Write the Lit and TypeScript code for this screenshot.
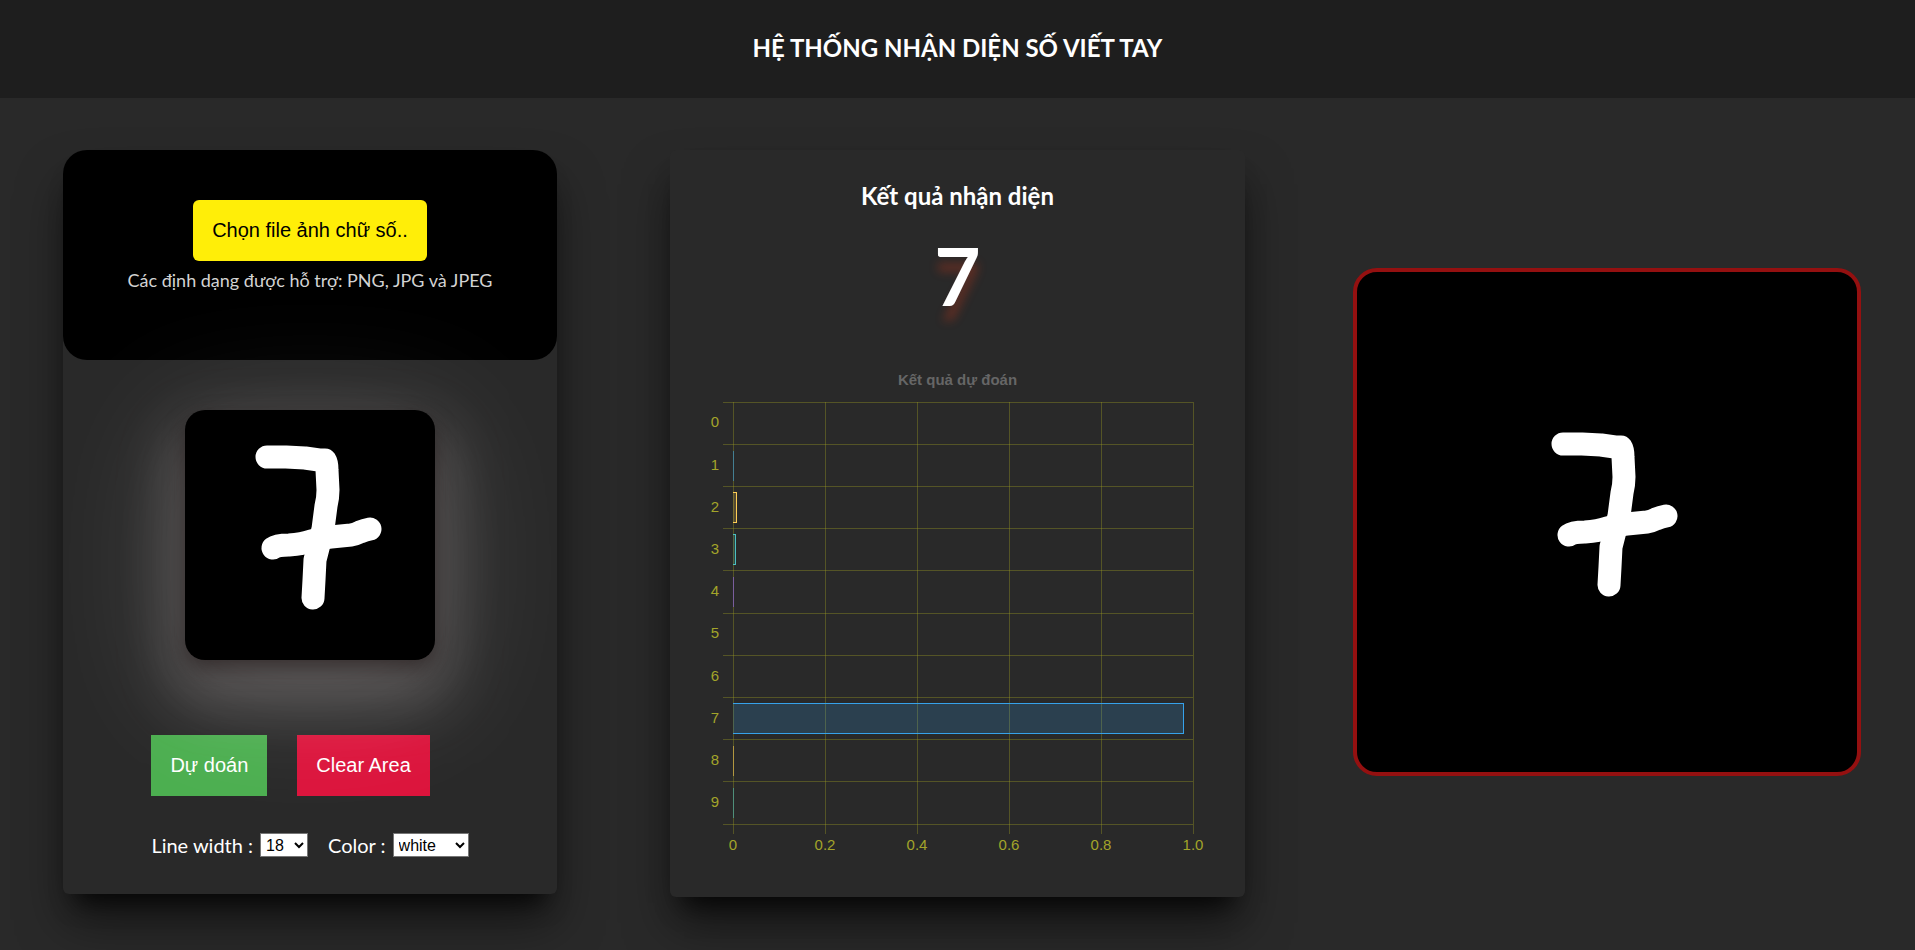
import { LitElement, html, svg, css } from "lit";
import { customElement, state } from "lit/decorators.js";

interface Bar {
  value: number;
  fill: string;
  stroke: string;
}

const PALETTE = [
  ["rgba(255,99,132,.2)", "rgb(255,99,132)"],
  ["rgba(54,162,235,.2)", "rgb(54,162,235)"],
  ["rgba(255,206,86,.2)", "rgb(255,206,86)"],
  ["rgba(75,192,192,.2)", "rgb(75,192,192)"],
  ["rgba(153,102,255,.2)", "rgb(153,102,255)"],
  ["rgba(255,159,64,.2)", "rgb(255,159,64)"],
];

const SCORES = [0, 0.001, 0.008, 0.006, 0.001, 0, 0, 0.98, 0.001, 0.001];

const BARS: Bar[] = SCORES.map((value, i) => ({
  value,
  fill: PALETTE[i % 6][0],
  stroke: PALETTE[i % 6][1],
}));

const stroke = svg`
  <g fill="none" stroke="#fff" stroke-width="23" stroke-linecap="round" stroke-linejoin="round">
    <path d="M82 47 H101 L120 48 L134 50 L140 50 Q142 53 142 60 L143 80 Q143 88 141 96 L138 119 Q134 134 130 150 L129 170 L128 188" />
    <path d="M88 138 Q92 135 104 135 Q118 134 126 131 Q136 128 146 127 L166 125 Q171 124 175 122 Q180 120 185 119" />
  </g>`;

@customElement("score-chart")
export class ScoreChart extends LitElement {
  static styles = css`
    :host {
      display: block;
    }
    .chart {
      margin: 0;
    }
    .caption {
      text-align: center;
      font: bold 15px/20px "Liberation Sans", Arial, sans-serif;
      color: #666;
      padding-bottom: 12px;
    }
    .area {
      padding: 0 52px 73px 63px;
    }
    .plot {
      display: block;
      width: 100%;
      height: 422px;
      overflow: visible;
    }
    .bar {
      stroke-width: 1;
      shape-rendering: crispEdges;
    }
    .grid {
      stroke: rgba(160, 160, 32, 0.36);
      stroke-width: 1;
      shape-rendering: crispEdges;
    }
    .label {
      font: 15px "Liberation Sans", Arial, sans-serif;
      fill: #a3a42a;
    }
    .end {
      text-anchor: end;
    }
    .mid {
      text-anchor: middle;
    }
  `;

  private renderBar(b: Bar, i: number) {
    if (b.value === 0) return null;
    const top = i * 10 + 1.5 + "%";
    if (b.value < 0.002) {
      return svg`<rect class="bar" x="0" y=${top} width="1" height="30" fill=${b.stroke} opacity=".55" />`;
    }
    return svg`<rect class="bar" x="-1" y=${top} width=${b.value * 100 + 0.2 + "%"} height="30" fill=${b.fill} stroke=${b.stroke} />`;
  }

  render() {
    return html`
      <figure class="chart">
        <figcaption class="caption">Kết quả dự đoán</figcaption>
        <div class="area">
          <svg class="plot" role="img" aria-label="Kết quả dự đoán">
            ${Array.from({ length: 11 }, (_, i) => {
              const y = i * 10 + "%";
              return svg`<line class="grid" x1="-10" x2="100%" y1=${y} y2=${y} />`;
            })}
            ${[0, 0.2, 0.4, 0.6, 0.8, 1].map((v) => {
              const x = v * 100 + "%";
              return svg`
                <line class="grid" x1=${x} x2=${x} y1="0" y2="432" />
                <text class="label mid" x=${x} y="448">${v === 1 ? "1.0" : v}</text>`;
            })}
            <svg width="100%" height="100%">${BARS.map((b, i) => this.renderBar(b, i))}</svg>
            ${BARS.map((_, i) => svg`<text class="label end" x="-14" y=${i * 10 + 6 + "%"}>${i}</text>`)}
          </svg>
        </div>
      </figure>
    `;
  }
}

@customElement("app-root")
export class AppRoot extends LitElement {
  @state() private digit = 7;

  static styles = css`
    :host {
      display: block;
      min-height: 100vh;
      background: #292929;
      color: #fff;
      font-family: Lato, sans-serif;
    }
    .header {
      background: #1e1e1e;
      padding: 32px 16px 34px;
      text-align: center;
    }
    .title {
      margin: 0;
      font-size: 24px;
      line-height: 32px;
      font-weight: 700;
    }
    .page {
      display: grid;
      grid-template-columns: 63fr 494fr 113fr 575fr 108fr 508fr 54fr;
      align-items: start;
      padding: 52px 0 48px;
    }
    .card {
      border-radius: 6px;
      background: #292929;
      box-shadow: 0 20px 24px -14px rgba(0, 0, 0, 0.8), 0 30px 48px -4px rgba(0, 0, 0, 0.5);
    }
    .draw {
      grid-column: 2;
      display: flex;
      flex-direction: column;
      align-items: center;
      border-radius: 24px 24px 6px 6px;
    }
    .result {
      grid-column: 4;
    }
    .preview {
      grid-column: 6;
      display: block;
      box-sizing: border-box;
      width: 100%;
      margin-top: 118px;
      border: 4px solid #941010;
      border-radius: 24px;
      background: #000;
    }
    .upload {
      box-sizing: border-box;
      width: 100%;
      height: 210px;
      padding-top: 50px;
      border-radius: 24px;
      background: #000;
      display: flex;
      flex-direction: column;
      align-items: center;
    }
    .pick {
      padding: 20px 19px;
      border-radius: 6px;
      background: #ffee08;
      color: #000;
      font: 20px/21px "Liberation Sans", Arial, sans-serif;
      cursor: pointer;
    }
    .file {
      position: absolute;
      width: 1px;
      height: 1px;
      opacity: 0;
    }
    .hint {
      margin: 7px 0 0;
      font-size: 18px;
      line-height: 24px;
      color: #d3d3d3;
    }
    .pad {
      display: block;
      position: relative;
      width: 250px;
      height: 250px;
      margin: 50px 0 75px;
      border-radius: 20px;
      background: #000;
      box-shadow: 0 8px 20px rgba(30, 20, 20, 0.6), 0 28px 56px 16px rgba(255, 236, 236, 0.17),
        0 28px 130px 16px rgba(255, 255, 255, 0.14);
    }
    .tools {
      display: flex;
      flex-direction: column;
    }
    .buttons {
      display: flex;
      gap: 30px;
    }
    .btn {
      border: 0;
      padding: 20px 19px;
      color: #fff;
      font: 20px/21px "Liberation Sans", Arial, sans-serif;
      cursor: pointer;
    }
    .go {
      background: #4caf50;
    }
    .clear {
      background: #dc143c;
    }
    .options {
      display: flex;
      align-items: center;
      gap: 7px;
      padding: 37px 0;
      font-size: 20px;
      line-height: 24px;
    }
    .select {
      font: 16px "Liberation Sans", Arial, sans-serif;
      height: 24px;
      margin: 0;
      padding: 0 0 0 1px;
      border: 1px solid #767676;
      background: #fff;
      color: #000;
    }
    .select-width {
      width: 48px;
      margin-right: 13px;
    }
    .select-color {
      width: 76px;
    }
    .heading {
      margin: 0;
      padding-top: 30px;
      text-align: center;
      font-size: 24px;
      line-height: 32px;
    }
    .digit {
      margin: 0;
      padding: 12px 0 44px;
      text-align: center;
      font-size: 80px;
      line-height: 102px;
      font-weight: 700;
      text-shadow: 0 15px 10px rgba(255, 60, 20, 0.25);
    }
  `;

  render() {
    return html`
      <header class="header"><h1 class="title">HỆ THỐNG NHẬN DIỆN SỐ VIẾT TAY</h1></header>
      <main class="page">
        <section class="card draw">
          <div class="upload">
            <label class="pick">Chọn file ảnh chữ số..<input class="file" type="file" accept=".png,.jpg,.jpeg" /></label>
            <p class="hint">Các định dạng được hỗ trợ: PNG, JPG và JPEG</p>
          </div>
          <svg class="pad" viewBox="0 0 250 250">${stroke}</svg>
          <div class="tools">
            <div class="buttons">
              <button class="btn go" type="button">Dự doán</button>
              <button class="btn clear" type="button">Clear Area</button>
            </div>
            <div class="options">
              <label for="width">Line width :</label>
              <select class="select select-width" id="width"><option>18</option></select>
              <label for="color">Color :</label>
              <select class="select select-color" id="color"><option>white</option></select>
            </div>
          </div>
        </section>
        <section class="card result">
          <h2 class="heading">Kết quả nhận diện</h2>
          <p class="digit">${this.digit}</p>
          <score-chart></score-chart>
        </section>
        <svg class="preview" viewBox="0 0 500 500"><g transform="translate(124 125)">${stroke}</g></svg>
      </main>
    `;
  }
}
